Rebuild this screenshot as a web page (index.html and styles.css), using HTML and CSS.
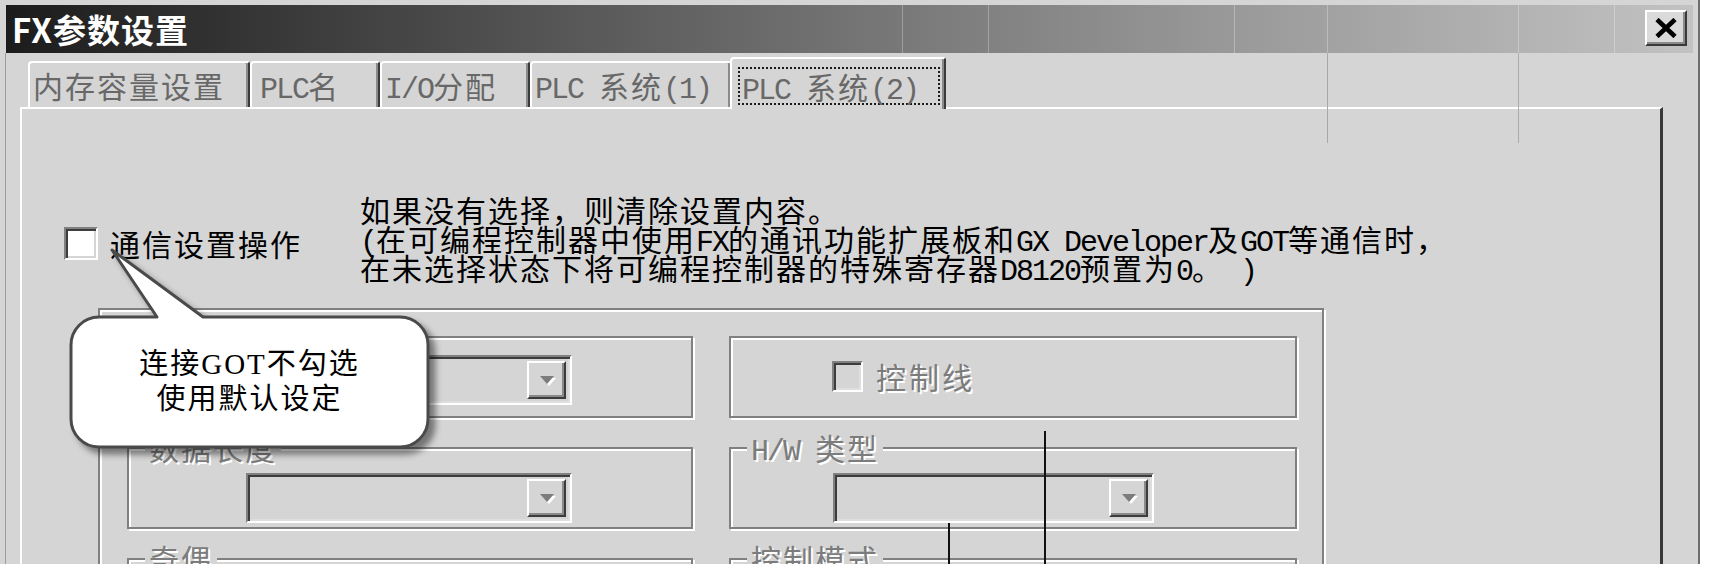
FILE: index.html
```html
<!DOCTYPE html>
<html lang="zh-CN">
<head>
<meta charset="utf-8">
<title>FX参数设置</title>
<link rel="stylesheet" href="styles.css">
</head>
<body>
<div class="window">
  <div class="titlebar">
    <span class="title">FX参数设置</span>
    <button class="close" aria-label="关闭">
      <svg width="24" height="20" viewBox="0 0 24 20"><path d="M3 1.5 L21 18.5 M21 1.5 L3 18.5" stroke="#000" stroke-width="4.6" fill="none"/></svg>
    </button>
  </div>
  <div class="client">
    <div class="tabs">
      <div class="tab t1">内存容量设置</div>
      <div class="tab t2"><span class="lat">PLC</span>名</div>
      <div class="tab t3"><span class="lat">I/O</span>分配</div>
      <div class="tab t4"><span class="lat">PLC </span>系统<span class="lat">(1)</span></div>
      <div class="tab sel"><span class="focus"><span class="lat">PLC </span>系统<span class="lat">(2)</span></span></div>
    </div>
    <div class="panel">
      <div class="top-row">
        <div class="chk-row">
          <span class="chk"></span>
          <span class="chk-text">通信设置操作</span>
        </div>
        <div class="desc">
          <p>如果没有选择，则清除设置内容。</p>
          <p><span class="lat">(</span>在可编程控制器中使用<span class="lat">FX</span>的通讯功能扩展板和<span class="lat">GX Developer</span>及<span class="lat">GOT</span>等通信时，</p>
          <p>在未选择状态下将可编程控制器的特殊寄存器<span class="lat">D8120</span>预置为<span class="lat">0</span>。<span class="lat"> )</span></p>
        </div>
      </div>
      <div class="outer-grp">
        <div class="grid">
          <div class="grp">
            <div class="legend">协议</div>
            <div class="combo cl ca"><span class="btn"><span class="arrow"></span></span></div>
          </div>
          <div class="grp">
            <div class="dchk-row">
              <span class="dchk"></span>
              <span class="dlabel">控制线</span>
            </div>
          </div>
          <div class="grp">
            <div class="legend">数据长度</div>
            <div class="combo cl cb"><span class="btn"><span class="arrow"></span></span></div>
          </div>
          <div class="grp">
            <div class="legend"><span class="lat">H/W </span>类型</div>
            <div class="combo cr"><span class="btn"><span class="arrow"></span></span></div>
          </div>
          <div class="grp">
            <div class="legend">奇偶</div>
          </div>
          <div class="grp">
            <div class="legend">控制模式</div>
          </div>
        </div>
      </div>
    </div>
  </div>

  <div class="callout">
    <svg class="bubble" width="400" height="230" viewBox="0 0 400 230">
      <path d="M44,77 L102,77 L57,10 L148,77 L345,77 A28,28 0 0 1 373,105 L373,179 A28,28 0 0 1 345,207 L44,207 A28,28 0 0 1 16,179 L16,105 A28,28 0 0 1 44,77 Z" fill="#fff" stroke="#4a4a4a" stroke-width="3" stroke-linejoin="round"/>
    </svg>
    <div class="callout-text">
      <span>连接GOT不勾选</span>
      <span>使用默认设定</span>
    </div>
  </div>

  <div class="scan t-a"></div>
  <div class="scan t-b"></div>
  <div class="scan t-c"></div>
  <div class="scan t-d"></div>
  <div class="scan t-e"></div>
  <div class="scan t-f"></div>
  <div class="scan b-d"></div>
  <div class="scan b-e"></div>
  <div class="ink ink-1"></div>
  <div class="ink ink-2"></div>
</div>
</body>
</html>
```

FILE: styles.css
```css
html, body {
  margin: 0;
  height: 564px;
  overflow: hidden;
  background: #fff;
}

body {
  font-family: "Noto Sans CJK SC", sans-serif;
}

.window {
  position: relative;
  width: 1700px;
  height: 564px;
  box-sizing: border-box;
  background: #d5d5d5;
  padding: 5px 5px 0 6px;
  border-right: 2px solid #6e6e6e;
  overflow: hidden;
}

/* title bar */
.titlebar {
  height: 48px;
  display: flex;
  align-items: center;
  justify-content: space-between;
  padding: 0 6px;
  background: linear-gradient(to right, #1c1c1c 0%, #5a5a5a 35%, #959595 70%, #c2c2c2 100%);
}

.title {
  color: #fff;
  font-weight: 700;
  font-size: 33px;
  line-height: 48px;
  letter-spacing: 1px;
}

.close {
  width: 42px;
  height: 36px;
  box-sizing: border-box;
  padding: 0;
  margin-top: -2px;
  background: #dadada;
  border: 2px solid;
  border-color: #fff #3a3a3a #3a3a3a #fff;
  box-shadow: inset -2px -2px 0 #8a8a8a;
  display: flex;
  align-items: center;
  justify-content: center;
}

/* client area */
.client {
  padding: 4px 30px 0 14px;
  margin-left: -1px;
  border-left: 1px solid #9c9c9c;
}

.lat {
  font-family: "Liberation Mono", monospace;
  letter-spacing: -2px;
}

/* tabs */
.tabs {
  display: flex;
  align-items: flex-end;
  height: 50px;
  padding-left: 8px;
}

.tab {
  box-sizing: border-box;
  height: 46px;
  border-top: 2px solid #fff;
  border-left: 2px solid #fff;
  border-right: 2px solid #3a3a3a;
  box-shadow: inset -2px 0 0 #8a8a8a;
  border-top-left-radius: 4px;
  border-top-right-radius: 3px;
  font-size: 30px;
  line-height: 36px;
  padding-top: 4px;
  letter-spacing: 2px;
  color: #686868;
  white-space: nowrap;
  overflow: hidden;
}

.t1 { width: 222px; padding-left: 3px; }
.t2 { width: 130px; padding-left: 8px; }
.t3 { width: 150px; padding-left: 3px; }
.t4 { width: 202px; padding-left: 3px; }

.tab.sel {
  width: 216px;
  height: 52px;
  margin: 0 -2px -2px;
  padding: 8px 0 0 6px;
  position: relative;
  z-index: 1;
  background: #d5d5d5;
}

.focus {
  display: inline-block;
  height: 38px;
  box-sizing: border-box;
  border: 2px dotted #1a1a1a;
  padding: 0 20px 0 2px;
  line-height: 34px;
}

/* tab page */
.panel {
  height: 460px;
  box-sizing: border-box;
  border-top: 2px solid #fff;
  border-left: 2px solid #fff;
  border-right: 3px solid #383838;
  padding-top: 86px;
}

.top-row {
  display: flex;
  align-items: flex-start;
}

.chk-row {
  display: flex;
  align-items: center;
  gap: 12px;
  width: 296px;
  flex: 0 0 296px;
  margin-left: 42px;
  margin-top: 32px;
  height: 33px;
}

.chk {
  width: 34px;
  height: 33px;
  box-sizing: border-box;
  background: #fff;
  border: 2px solid;
  border-color: #808080 #fff #fff #808080;
  box-shadow: inset 2px 2px 0 #3c3c3c, inset -2px -2px 0 #d5d5d5;
}

.chk-text {
  font-size: 30px;
  line-height: 33px;
  letter-spacing: 2px;
  color: #000;
}

.desc {
  font-size: 30px;
  line-height: 29px;
  letter-spacing: 2px;
  color: #000;
}

.desc p {
  margin: 0;
  height: 29px;
  white-space: nowrap;
}

/* group boxes */
.outer-grp {
  width: 1226px;
  height: 420px;
  box-sizing: border-box;
  margin: 26px 0 0 76px;
  border: 2px solid #808080;
  box-shadow: inset 2px 2px 0 #fff, 2px 2px 0 #fff;
  padding: 26px 0 0 27px;
}

.grid {
  display: grid;
  grid-template-columns: 566px 568px;
  grid-auto-rows: 82px;
  column-gap: 36px;
  row-gap: 29px;
}

.grp {
  box-sizing: border-box;
  border: 2px solid #808080;
  box-shadow: inset 2px 2px 0 #fff, 2px 2px 0 #fff;
}

.legend {
  width: fit-content;
  height: 30px;
  margin: -17px 0 -13px 16px;
  padding: 0 4px;
  background: #d5d5d5;
  font-size: 30px;
  line-height: 30px;
  letter-spacing: 2px;
  color: #7c7c7c;
  text-shadow: 2px 2px 0 #fff;
  white-space: nowrap;
}

.combo {
  height: 50px;
  box-sizing: border-box;
  border: 2px solid;
  border-color: #808080 #fff #fff #808080;
  box-shadow: inset 2px 2px 0 #3c3c3c, inset -2px -2px 0 #dedede;
  padding: 4px;
  display: flex;
  justify-content: flex-end;
  background: #d5d5d5;
}

.cl { width: 326px; margin-left: 117px; }
.ca { margin-top: 17px; }
.cb { margin-top: 24px; }
.cr { width: 321px; margin-left: 102px; margin-top: 24px; }

.btn {
  width: 39px;
  box-sizing: border-box;
  background: #d5d5d5;
  border: 2px solid;
  border-color: #fff #3c3c3c #3c3c3c #fff;
  box-shadow: inset -2px -2px 0 #8a8a8a;
  display: flex;
  align-items: center;
  justify-content: center;
}

.arrow {
  width: 0;
  height: 0;
  border-left: 7px solid transparent;
  border-right: 7px solid transparent;
  border-top: 8px solid #7c7c7c;
  filter: drop-shadow(2px 2px 0 #fff);
}

.dchk-row {
  display: flex;
  align-items: center;
  gap: 13px;
  margin: 23px 0 0 101px;
}

.dchk {
  width: 31px;
  height: 31px;
  box-sizing: border-box;
  border: 2px solid;
  border-color: #808080 #fff #fff #808080;
  box-shadow: inset 2px 2px 0 #3c3c3c, inset -2px -2px 0 #dedede;
  background: #d5d5d5;
}

.dlabel {
  font-size: 30px;
  line-height: 31px;
  letter-spacing: 3px;
  color: #7c7c7c;
  text-shadow: 2px 2px 0 #fff;
}

/* callout overlay */
.callout {
  position: absolute;
  left: 55px;
  top: 240px;
  width: 400px;
  height: 230px;
  z-index: 5;
}

.bubble {
  display: block;
  filter: drop-shadow(6px 6px 3px rgba(0, 0, 0, 0.45));
}

.callout-text {
  position: absolute;
  left: 16px;
  top: 77px;
  width: 357px;
  height: 130px;
  display: flex;
  flex-direction: column;
  align-items: center;
  justify-content: center;
  font-family: "Liberation Serif", "Noto Sans CJK SC", serif;
  font-size: 29px;
  line-height: 35px;
  letter-spacing: 2px;
  color: #000;
}

/* scan artifacts over the picture */
.scan {
  position: absolute;
  width: 1px;
  top: 5px;
  height: 48px;
  background: rgba(255, 255, 255, 0.28);
  z-index: 6;
}
.t-a { left: 902px; }
.t-b { left: 988px; }
.t-c { left: 1234px; }
.t-d { left: 1327px; }
.t-e { left: 1518px; }
.t-f { left: 1614px; }
.b-d { left: 1327px; top: 53px; height: 90px; background: #a8a8a8; }
.b-e { left: 1518px; top: 53px; height: 90px; background: #ababab; }

.ink {
  position: absolute;
  width: 2px;
  background: #111;
  z-index: 6;
}
.ink-1 { left: 1044px; top: 431px; height: 140px; }
.ink-2 { left: 948px; top: 523px; height: 50px; }
```
